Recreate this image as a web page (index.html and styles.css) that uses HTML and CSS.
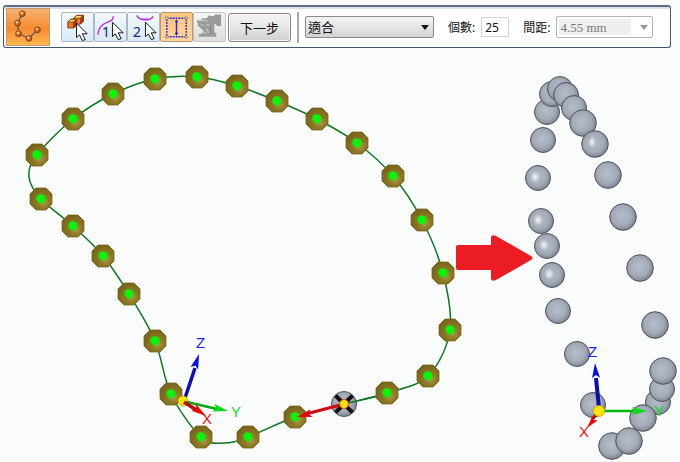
FILE: index.html
```html
<!DOCTYPE html>
<html lang="zh-Hant">
<head>
<meta charset="utf-8">
<title>沿曲線複製排列</title>
<link rel="stylesheet" href="styles.css">
</head>
<body>
<form class="toolbar">
  <button type="button" class="command" aria-label="沿曲線複製排列">
    <svg viewBox="0 0 44 38">
      <path d="M16 5 11 15 12 26 23 31 32 22" fill="none" stroke="#536274" stroke-width="1.5"/>
      <g fill="url(#bead)" stroke="#8a3809" stroke-width="1">
        <circle cx="16" cy="5" r="3"/><circle cx="11" cy="15" r="3"/><circle cx="12" cy="26" r="3"/><circle cx="23" cy="31" r="3"/><circle cx="32" cy="22" r="3"/>
      </g>
    </svg>
  </button>
  <div class="tools">
    <button type="button" class="tool" aria-label="選取特徵">
      <svg viewBox="0 0 32 28">
        <g stroke="#8b3c12" stroke-width="1">
          <path d="M12 5 15 2H22V8L19 11H12Z" fill="#f0852c"/><path d="M12 5 15 2H22L19 5Z" fill="#ffd75e"/><path d="M19 5 22 2V8L19 11Z" fill="#b5330f"/>
          <path d="M6 9 9 6H15V12L12 15H6Z" fill="#f0762c"/><path d="M6 9 9 6H15L12 9Z" fill="#ffd75e"/><path d="M12 9 15 6V12L12 15Z" fill="#b5330f"/>
        </g>
        <use href="#pointer" x="15" y="10"/>
      </svg>
    </button>
    <button type="button" class="tool" aria-label="選取曲線">
      <svg viewBox="0 0 32 28">
        <path d="M3 22C4 13 8 11 13 9S18 7 19 3" fill="none" stroke="#b535ed" stroke-width="1.5"/>
        <text class="digit" x="7" y="24">1</text>
        <use href="#pointer" x="18" y="9"/>
      </svg>
    </button>
    <button type="button" class="tool" aria-label="選取參考">
      <svg viewBox="0 0 32 28">
        <path d="M9 2C12 8 23 8 26 3M14 6H21" fill="none" stroke="#b535ed" stroke-width="1.5"/>
        <text class="digit" x="5" y="24">2</text>
        <use href="#pointer" x="18" y="9"/>
      </svg>
    </button>
    <button type="button" class="tool tool-active" aria-label="間距">
      <svg viewBox="0 0 32 28">
        <rect x="6" y="5" width="20" height="19" fill="none" stroke="#2926dc" stroke-width="1.5" stroke-dasharray="2 1"/>
        <path d="M16 8V21" stroke="#2926dc" stroke-width="1.5"/><path d="M16 6 18 9H14ZM16 23 18 20H14Z" fill="#2926dc"/>
        <g fill="#d1cabe" stroke="#8e8272"><circle cx="6" cy="5" r="1.5"/><circle cx="26" cy="5" r="1.5"/><circle cx="6" cy="24" r="1.5"/><circle cx="26" cy="24" r="1.5"/></g>
      </svg>
    </button>
    <button type="button" class="tool tool-off" aria-label="進階" disabled>
      <svg viewBox="0 0 32 28">
        <path d="M3 7H8V5H13L15 2 20 3 22 1H28V13H24L22 11H21V20H23V24H5V21H8L10 18 7 15 4 13V10L3 9Z" fill="#9b9b9b"/>
        <path d="M4 7H12L14 9M12 12H17M7 11 10 13M13 15 15 20M9 20H13" fill="none" stroke="#d4d4d4"/><path d="M17 11V22" stroke="#858585"/>
      </svg>
    </button>
  </div>
  <button type="button" class="next">下一步</button>
  <div class="fields">
    <div class="combo">
      <select class="fit" aria-label="排列方式"><option>適合</option></select>
    </div>
    <label class="label" for="count">個數:</label>
    <input class="count" id="count" type="text" value="25">
    <label class="label" for="gap">間距:</label>
    <div class="combo combo-off">
      <select class="gap" id="gap" disabled><option>4.55 mm</option></select>
    </div>
  </div>
</form>

<svg class="scene" viewBox="0 50 680 412">
  <defs>
    <radialGradient id="bead" cx=".35" cy=".3" r=".7"><stop offset="0" stop-color="#fff2d8"/><stop offset=".4" stop-color="#f08a34"/><stop offset="1" stop-color="#a9480c"/></radialGradient>
    <radialGradient id="olive" cx=".62" cy=".64" r=".65"><stop offset="0" stop-color="#b09a52"/><stop offset=".4" stop-color="#8f7b25"/><stop offset="1" stop-color="#76641a"/></radialGradient>
    <radialGradient id="steel" cx=".46" cy=".45" r=".56"><stop offset="0" stop-color="#b6bdc8"/><stop offset=".65" stop-color="#a3abb7"/><stop offset="1" stop-color="#7b838e"/></radialGradient>
    <radialGradient id="shine"><stop offset="0" stop-color="#fff" stop-opacity=".85"/><stop offset="1" stop-color="#fff" stop-opacity="0"/></radialGradient>
    <path id="pointer" d="M0 0V15L3 12 6 18 9 17 6 11H11Z" fill="#fff" stroke="#111" stroke-width="1"/>
    <g id="node">
      <path d="M-5-11H5L11-5V5L5 11H-5L-11 5V-5Z" fill="url(#olive)" stroke="#78651c" stroke-width=".8" stroke-linejoin="round"/>
      <path d="M-3-4 0-5 4-3 4.500 1 2 4 0 5-3 3-4.500 1-4.500-2Z" fill="#09f40c"/>
    </g>
    <g id="ball"><circle r="12.500" fill="url(#steel)" stroke="#50565e"/></g>
    <g id="litball"><use href="#ball"/><ellipse cx="-3" cy="-1" rx="5" ry="6" fill="url(#shine)"/></g>
    <g id="bigball"><circle r="13.300" fill="url(#steel)" stroke="#50565e"/></g>
    <g id="litbigball"><use href="#bigball"/><ellipse cx="-3" cy="-2" rx="4" ry="6" fill="url(#shine)"/></g>
    <path id="head" d="M0 0-15-4-12 0-15 4Z"/>
  </defs>

  <path class="curve" id="curve"/>
  <use href="#ball" x="344" y="404"/>
  <path d="M344 404 387 394" class="curve"/>
  <g id="nodes"></g>
  <path d="M337 397 340 400M351 397 348 400M337 411 340 408M351 411 348 408" stroke="#111" stroke-width="4" stroke-linecap="square"/>
  <path d="M344 404 306 414" stroke="#d00a10" stroke-width="3"/>
  <use href="#head" fill="#df0810" transform="translate(297 417) rotate(165)"/>
  <circle cx="344" cy="404" r="4.500" fill="#ffe600" stroke="#e9472b" stroke-width="1"/>

  <g>
    <path d="M184 401 195 368" stroke="#0d0dbd" stroke-width="3.500"/>
    <use href="#head" fill="#0b0bee" transform="translate(199 354) rotate(-72)"/>
    <circle cx="183" cy="401" r="5" fill="#ffe600" stroke="#b69a08" stroke-width=".7"/>
    <path d="M187 402 217 409" stroke="#07a90c" stroke-width="2.500"/>
    <use href="#head" fill="#05dd12" transform="translate(228 411) rotate(13)"/>
    <path d="M184 402 198 411" stroke="#b40a10" stroke-width="3.500"/>
    <use href="#head" fill="#ed0808" transform="translate(206 416) rotate(35)"/>
    <text class="axis axis-z" x="196" y="348">Z</text>
    <text class="axis axis-y" x="231" y="417">Y</text>
    <text class="axis axis-x" x="202" y="424">X</text>
  </g>

  <path d="M456 247Q456 245 458 245H491V237Q492 234 496 236L531 256Q534 258 531 260L496 280Q492 282 491 279V270H458Q456 270 456 268Z" fill="#ec1c24"/>

  <g id="balls"></g>
  <g>
    <path d="M599 408 596 378" stroke="#0d0dab" stroke-width="4"/>
    <use href="#head" fill="#0b0be4" transform="translate(595 363) rotate(-94)"/>
    <path d="M603 411H634" stroke="#07b60c" stroke-width="2.500"/>
    <use href="#head" fill="#05dd12" transform="translate(647 411)"/>
    <path d="M597 413 592 420" stroke="#b40a10" stroke-width="3"/>
    <use href="#head" fill="#ed0808" transform="translate(587 428) rotate(129) scale(.85)"/>
    <circle cx="599" cy="411" r="5.500" fill="#ffe600" stroke="#c5a404" stroke-width=".7"/>
    <text class="axis axis-z" x="588" y="357">Z</text>
    <text class="axis axis-y" x="654" y="416">Y</text>
    <text class="axis axis-x" x="579" y="437">X</text>
  </g>
</svg>
<script src="scene.js"></script>
</body>
</html>
```
FILE: styles.css
```css
* { box-sizing: border-box; }
body {
  margin: 0;
  background: #fafcfb;
  font-family: "Noto Sans", "Noto Sans CJK TC", sans-serif;
  font-size: 13px;
  color: #111;
}
.toolbar {
  display: flex;
  align-items: center;
  height: 43px;
  margin: 5px 9px 2px 3px;
  padding: 0 2px;
  background: #fff;
  border: 1px solid #40546d;
  border-top: 2px solid #5c6f84;
  border-radius: 3px;
  box-shadow: inset 0 2px 1px #d9dfe7;
}
button, input, select {
  margin: 0;
  padding: 0;
  font: inherit;
  color: inherit;
}
.command {
  flex: none;
  width: 44px;
  height: 38px;
  border: 1px solid #c39b72;
  background: linear-gradient(#f6b273, #f78b32 55%, #ffb64f);
}
.command svg, .tool svg { display: block; width: 100%; height: 100%; }
.tools { display: flex; flex: none; margin-left: 11px; }
.tool {
  width: 33px;
  height: 30px;
  border: 1px solid #aab9c8;
  border-radius: 2px;
  background: linear-gradient(#f3f9fe, #d9e9f7);
}
.tool-active { border-color: #b69872; background: linear-gradient(#ffc77e, #ffd599); }
.tool-off { border-color: #c3c3c3; background: linear-gradient(#f5f5f5, #dedede); }
.digit { font-size: 15px; fill: #25258e; }
.next {
  flex: none;
  width: 63px;
  height: 29px;
  margin-left: 2px;
  border: 1px solid #858585;
  border-radius: 3px;
  background: linear-gradient(#f4f4f4, #e6e6e6 50%, #cecece);
  box-shadow: inset 0 0 0 1px #f5f5f5;
}
.fields {
  display: flex;
  flex: 1;
  align-items: center;
  height: 31px;
  margin-left: 6px;
  padding-left: 6px;
  border-left: 2px solid #aaa;
}
.combo { position: relative; }
.combo::after {
  content: "";
  position: absolute;
  right: 5px;
  top: 9px;
  border: 4px solid transparent;
  border-top: 5px solid #111;
  border-bottom: 0;
  pointer-events: none;
}
.combo-off::after { border-top-color: #999; }
select {
  display: block;
  appearance: none;
  height: 22px;
  border: 1px solid #8c8c8c;
  border-radius: 2px;
}
.fit {
  width: 129px;
  padding-left: 2px;
  background: linear-gradient(#f4f4f4, #e4e4e4 55%, #d2d2d2);
}
.label { margin: 0 6px 0 14px; white-space: nowrap; font-size: 12px; }
.count {
  width: 28px;
  height: 20px;
  padding-left: 3px;
  border: 1px solid #ccd6e2;
  background: #fff;
  font-size: 12px;
}
.gap {
  width: 97px;
  padding-left: 3px;
  border-color: #b5b5b5;
  background: linear-gradient(#efefef, #efefef) 2px 2px / 72px 16px no-repeat #fff;
  color: #777;
  font-family: "Liberation Serif", serif;
  font-size: 13px;
  opacity: 1;
}
.scene { display: block; width: 100%; height: auto; }
.curve { fill: none; stroke: #0d7725; stroke-width: 1.5px; }
.axis { font-family: "Liberation Sans", sans-serif; font-size: 15px; }
.axis-x { fill: #f01010; }
.axis-y { fill: #10dc18; }
.axis-z { fill: #2020f0; }
```
FILE: scene.js
```js
const SVG = 'http://www.w3.org/2000/svg';

// Points along the closed curve; a third value of 0 marks a point without a node.
const points = [
  [197, 77], [237, 86], [277, 101], [317, 119], [357, 143], [393, 176],
  [422, 220], [443, 273], [450, 330], [428, 376], [387, 393], [344, 404, 0],
  [295, 417], [248, 437], [224, 443, 0], [201, 437], [171, 394], [155, 341],
  [129, 294], [103, 256], [73, 226], [41, 199], [29, 177, 0], [37, 155],
  [73, 119], [113, 94], [155, 79]
];

const balls = [
  [547, 112, 'ball'], [552, 94, 'ball'], [560, 89, 'ball'], [566, 95, 'ball'],
  [574, 108, 'ball'], [583, 123, 'bigball'], [595, 144, 'litbigball'],
  [543, 140, 'ball'], [538, 178, 'litball'], [541, 221, 'litball'],
  [547, 246, 'litball'], [552, 275, 'litball'], [558, 311, 'ball'],
  [577, 354, 'ball'], [593, 405, 'ball'], [608, 175, 'bigball'],
  [623, 217, 'bigball'], [640, 268, 'bigball'], [655, 325, 'bigball'],
  [658, 402, 'ball'], [662, 389, 'ball'], [663, 371, 'bigball'],
  [643, 418, 'bigball'], [612, 446, 'bigball'], [629, 441, 'bigball']
];

function place(group, shape, x, y) {
  const use = document.createElementNS(SVG, 'use');
  use.setAttribute('href', '#' + shape);
  use.setAttribute('x', x);
  use.setAttribute('y', y);
  document.getElementById(group).append(use);
}

// Smooth closed spline through every point.
const n = points.length;
let d = `M${points[0][0]} ${points[0][1]}`;
for (let i = 0; i < n; i++) {
  const [a, b, c, e] = [-1, 0, 1, 2].map(k => points[(i + k + n) % n]);
  d += `C${b[0] + (c[0] - a[0]) / 6} ${b[1] + (c[1] - a[1]) / 6} ` +
       `${c[0] - (e[0] - b[0]) / 6} ${c[1] - (e[1] - b[1]) / 6} ${c[0]} ${c[1]}`;
}
document.getElementById('curve').setAttribute('d', d);

points.filter(p => p[2] !== 0).forEach(p => place('nodes', 'node', p[0], p[1]));
balls.forEach(([x, y, shape]) => place('balls', shape, x, y));
```
